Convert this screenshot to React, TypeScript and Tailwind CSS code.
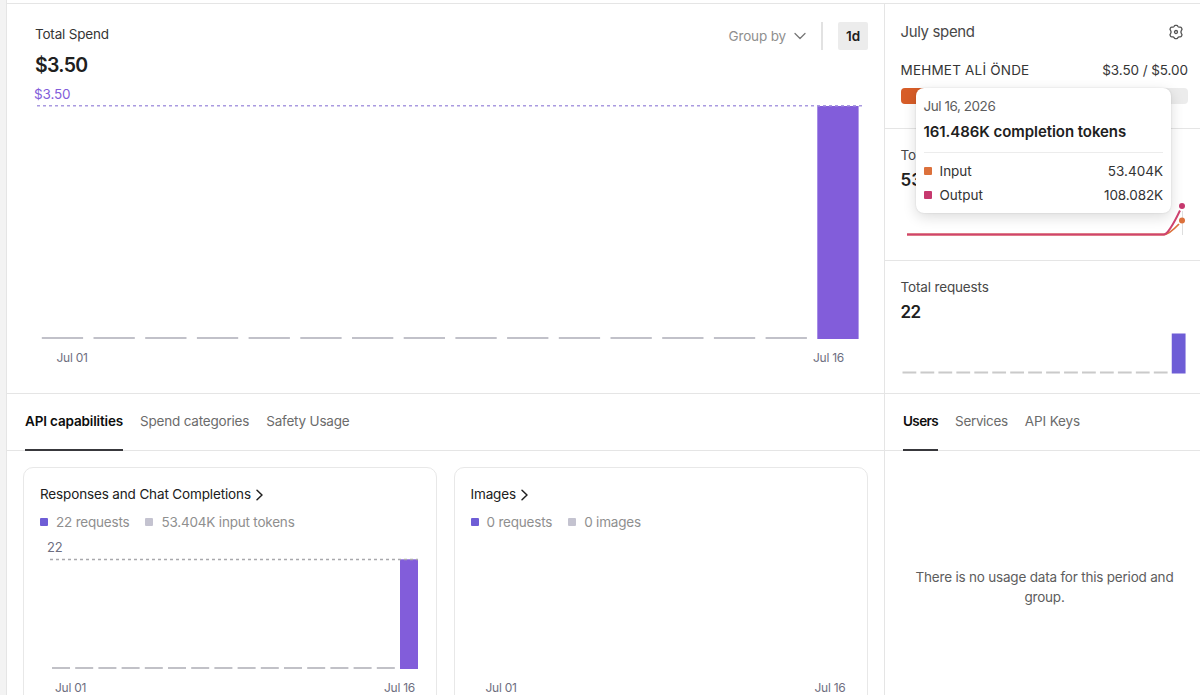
import type { ReactNode } from 'react'

const emptyDays = Array.from({ length: 15 }, (_, i) => i)

const DayBars = ({
  x,
  baseline,
  pitch,
  width,
  top,
  bottom,
  color,
  stub,
}: {
  x: number
  baseline: number
  pitch: number
  width: number
  top: number
  bottom: number
  color: string
  stub: string
}) => (
  <>
    {emptyDays.map((day) => (
      <rect key={day} x={x + day * pitch} y={baseline} width={width} height={2} fill={stub} />
    ))}
    <rect x={x + 15 * pitch} y={top} width={width} height={bottom - top} fill={color} />
  </>
)

const Tab = ({
  active = false,
  className = 'tracking-[-0.15px]',
  children,
}: {
  active?: boolean
  className?: string
  children: ReactNode
}) =>
  active ? (
    <button className={`h-[57px] border-b-2 border-[#38383c] pb-px font-semibold text-[#0d0d0d] ${className}`}>
      {children}
    </button>
  ) : (
    <button className={`h-[57px] pb-[3px] text-[#6b6b6b] ${className}`}>{children}</button>
  )

const LegendItem = ({ color, children }: { color: string; children: ReactNode }) => (
  <span className="flex items-center gap-2">
    <span className={`size-2 rounded-[1px] ${color}`} />
    {children}
  </span>
)

const CapabilityCard = ({
  title,
  metrics,
  chart = false,
}: {
  title: string
  metrics: [string, string]
  chart?: boolean
}) => (
  <section className="h-[260px] w-[414px] rounded-[10px] border border-[#e8e8e8] pt-4 tracking-[-0.14px]">
    <h3 className="flex h-5 items-center gap-1 px-4 text-[#202020]">
      {title}
      <svg className="mt-px" width="10" height="12" viewBox="0 0 10 12" fill="none" stroke="currentColor" strokeWidth="1.5">
        <path d="M2 1.2 7 6 2 10.8" strokeLinecap="round" strokeLinejoin="round" />
      </svg>
    </h3>
    <div className="mt-2 flex h-5 items-center gap-4 px-4 tracking-[-0.2px] text-[#8f8f8f]">
      <LegendItem color="bg-[#6e5dd6]">{metrics[0]}</LegendItem>
      <LegendItem color="bg-[#c4c3d0]">{metrics[1]}</LegendItem>
    </div>
    <div className="h-4 pl-[23px] pt-[7px] text-[13px] leading-4 text-[#6e6e80]">{chart ? '22' : ''}</div>
    <svg className="mt-2.5 block" width="412" height="121">
      {chart && (
        <>
          <DayBars x={28} baseline={109} pitch={23.2} width={18} top={1.3} bottom={111} color="#825dda" stub="#c1c1c7" />
          <path d="M26 1.5H394" stroke="#a8a8ac" strokeWidth="1.5" strokeDasharray="3 3" />
        </>
      )}
    </svg>
    <div className="flex justify-between pl-[31px] pr-[21px] text-xs leading-[17px] tracking-[-0.25px] text-[#6e6e80]">
      <span>Jul 01</span>
      <span>Jul 16</span>
    </div>
  </section>
)

const Gear = () => (
  <svg width="16" height="16" viewBox="0 0 16 16" fill="none" stroke="#555" strokeWidth="1.3" strokeLinejoin="round">
    <path d="M6.2 2.2Q6.500 1.300 7.300 1.300H8.700Q9.500 1.300 9.800 2.200Q10.300 3.300 11.500 3.200Q12.900 2.900 13.300 3.600L13.900 4.700Q14.300 5.400 13.500 6.200Q12.300 8 13.500 9.800Q14.300 10.600 13.900 11.300L13.300 12.400Q12.900 13.100 11.500 12.800Q10.300 12.700 9.800 13.800Q9.500 14.700 8.700 14.700H7.300Q6.500 14.700 6.200 13.800Q5.700 12.700 4.500 12.800Q3.100 13.100 2.700 12.400L2.100 11.300Q1.700 10.600 2.500 9.800Q3.700 8 2.500 6.200Q1.700 5.400 2.100 4.700L2.700 3.600Q3.100 2.900 4.500 3.200Q5.700 3.300 6.200 2.200Z" />
    <circle cx="8" cy="8" r="1.5" />
  </svg>
)

const TokenTooltip = () => (
  <div className="absolute left-[30.5px] top-[84px] h-[125px] w-[255.5px] rounded-lg bg-white px-2 pt-2 shadow-[0_4px_14px_rgba(0,0,0,0.14),0_0_2px_rgba(0,0,0,0.12)]">
    <div className="h-5 leading-5 tracking-[-0.45px] text-[#5d5d5d]">Jul 16, 2026</div>
    <div className="mt-1 h-6 text-[15px] font-semibold leading-6 tracking-[-0.06px] text-[#202020]">
      161.486K completion tokens
    </div>
    <div className="mt-2 h-[7px] border-t border-[#ececec]" />
    <div className="flex h-6 items-center justify-between text-[#333]">
      <LegendItem color="bg-[#dc713c]">Input</LegendItem>
      <span>53.404K</span>
    </div>
    <div className="flex h-6 items-center justify-between text-[#333]">
      <LegendItem color="bg-[#c6396e]">Output</LegendItem>
      <span className="tracking-[-0.1px]">108.082K</span>
    </div>
  </div>
)

export default function App() {
  return (
    <div className="flex h-[695px] w-[1200px] overflow-hidden bg-[#f3f3f3] pl-1.5 font-['Inter',sans-serif] text-[13.5px] leading-5">
      <div className="flex w-[1194px] flex-col border-l border-[#e5e5e5] bg-white">
        <div className="h-1 shrink-0 border-b border-[#e5e5e5]" />
        <div className="flex h-[691px]">
          <main className="w-[877px]">
            <section className="h-[390px] border-b border-[#e5e5e5] pt-[18px]">
              <div className="flex h-7 items-center pl-7 pr-4">
                <h2 className="-mt-1 tracking-[-0.2px] text-[#353535]">Total Spend</h2>
                <button className="ml-auto flex items-center gap-2 tracking-[-0.15px] text-[#8f8f8f]">
                  Group by
                  <svg width="12" height="12" viewBox="0 0 12 12" fill="none" stroke="#777" strokeWidth="1.3">
                    <path d="m1 3.5 5 5 5-5" strokeLinecap="round" strokeLinejoin="round" />
                  </svg>
                </button>
                <span className="ml-[15px] h-7 w-[2px] bg-[#e2e2e2]" />
                <button className="ml-[15px] h-7 w-[30px] rounded-[2px] bg-[#ececec] font-semibold text-[#202020]">1d</button>
              </div>
              <div className="mt-px h-7 pl-7 text-[19.5px] font-semibold leading-7 tracking-[-0.65px] text-[#202020]">$3.50</div>
              <div className="mt-[7px] h-4 pl-[27px] leading-4 tracking-[-0.15px] text-[#825dda]">$3.50</div>
              <svg className="block" width="877" height="248">
                <DayBars x={34.8} baseline={235} pitch={51.7} width={41.3} top={4} bottom={237} color="#825dda" stub="#c1c1c9" />
                <path d="M30 3.8H857" stroke="#a99ae0" strokeWidth="1.5" strokeDasharray="3 3" />
              </svg>
              <div className="flex justify-between pl-[49.5px] pr-[40px] text-xs leading-4 tracking-[-0.25px] text-[#6e6e80]">
                <span>Jul 01</span>
                <span>Jul 16</span>
              </div>
            </section>
            <nav className="flex h-[57px] gap-[17px] border-b border-[#e5e5e5] pl-[18px]">
              <Tab active>API capabilities</Tab>
              <Tab className="tracking-[-0.2px]">Spend categories</Tab>
              <Tab className="tracking-[-0.2px]">Safety Usage</Tab>
            </nav>
            <div className="flex gap-[16.5px] pl-4 pt-4">
              <CapabilityCard title="Responses and Chat Completions" metrics={['22 requests', '53.404K input tokens']} chart />
              <CapabilityCard title="Images" metrics={['0 requests', '0 images']} />
            </div>
          </main>

          <aside className="relative w-[316px] border-l border-[#e5e5e5]">
            <section className="h-[125px] border-b border-[#e5e5e5] pl-[15.5px] pr-3 pt-[18px]">
              <div className="flex h-5 items-center justify-between pr-1 text-[15px] tracking-[-0.35px] text-[#484848]">
                July spend
                <Gear />
              </div>
              <div className="mt-[18px] flex h-5 items-center justify-between text-[#353535]">
                <span className="tracking-[0.2px]">MEHMET ALİ ÖNDE</span>
                <span className="tracking-[-0.07px]">$3.50 / $5.00</span>
              </div>
              <div className="mt-2 h-4 overflow-hidden rounded bg-[#ececec]">
                <div className="h-4 w-[70%] bg-[#d75d28]" />
              </div>
            </section>
            <section className="h-[132px] border-b border-[#e5e5e5] pt-4">
              <div className="pl-[15.5px] tracking-[-0.15px] text-[#484848]">Total tokens</div>
              <div className="mt-[3px] h-[25px] pl-[15.5px] text-[17px] font-semibold leading-6 text-[#202020]">53.404K</div>
              <svg className="block" width="315" height="60">
                <path d="M297.5 18V42" stroke="#dedede" />
                <path d="M22 41.5H279Q284 41.5 294 31" fill="none" stroke="#dc713c" strokeWidth="1.8" />
                <path d="M22 41.5H279Q284 40.5 295 17.500" fill="none" stroke="#cf4370" strokeWidth="2" />
                <circle cx="297" cy="13" r="3" fill="#c6396e" />
                <circle cx="297" cy="27.5" r="3" fill="#dc713c" />
              </svg>
            </section>
            <section className="h-[133px] border-b border-[#e5e5e5] pt-4">
              <div className="pl-[15.5px] tracking-[-0.15px] text-[#484848]">Total requests</div>
              <div className="mt-[3px] h-[25px] pl-[15.5px] text-[17px] font-semibold leading-6 tracking-[-0.5px] text-[#202020]">
                22
              </div>
              <svg className="block" width="315" height="60">
                <DayBars x={17.5} baseline={46.5} pitch={17.95} width={13.8} top={8.5} bottom={48.5} color="#6e5dd6" stub="#cacaca" />
              </svg>
            </section>
            <nav className="flex h-[57px] gap-[17px] border-b border-[#e5e5e5] pl-[18px]">
              <Tab active className="tracking-[-0.6px]">Users</Tab>
              <Tab className="tracking-[-0.35px]">Services</Tab>
              <Tab className="tracking-[-0.1px]">API Keys</Tab>
            </nav>
            <p className="pl-7 pr-6 pt-[116px] text-center tracking-[-0.2px] text-[#5d5d5d]">
              There is no usage data for this period and group.
            </p>
            <TokenTooltip />
          </aside>
        </div>
      </div>
    </div>
  )
}
